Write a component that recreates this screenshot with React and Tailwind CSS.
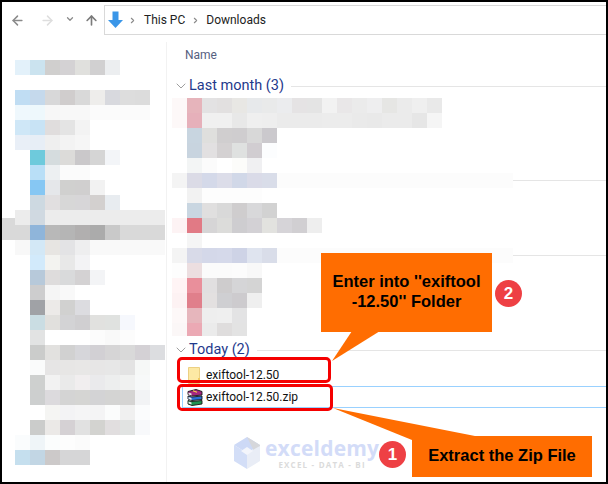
import React from 'react';
import { ArrowLeft, ArrowRight, ArrowUp, ChevronDown, ChevronRight } from 'lucide-react';

// blurred nav pane, one row per 15px, first cell sits at x=15
const sidebarRows = [
  ['#e3f1fa', '#cbe3ef', '#d0cfce', '#d4d2d4', '#e0e0dd', '#d1d0d1', '#eceef0'],
  [],
  ['#c0ddf3', '#c5d9ec', '#d8d8d9', '#d0cdcd', '#d9d9d9', '#eeedeb', '#d8d9de', '#dddddd', '#dcdcdc'],
  ['#eff8fd', '#eef8fc', '#f7f7f7', '#f8f8f8', '#f8f8f8', '#fbfbfb', '#fbfbfb', '#fbfbfb', '#fbfbfb'],
  ['#cfe7f7', '#c8e3f5', '#e0dddd', '#e4e4e4', '#f3f3f3'],
  ['#e9eff7', '#e7eef6', '#efefef', '#f3f3f3', '#f6f6f6'],
  ['', '#6ecadc', '#d5dcde', '#dcdbd9', '#cac8ca', '#d5d5d5', '#f3f5f8'],
  ['', '#b9dff7', '#edf0f2', '#fbfbfb', '#fbfbfb'],
  ['', '#86c7f3', '#e5e7ea', '#d0d0cf', '#d0cfcf', '#f2f2f2'],
  ['', '#cdd9e1', '#e1dfe0', '#d7d7d7', '#d7d6d8', '#d3d0cf', '#e8ecf0'],
  ['#ececec', '#d0d9e1', '#ececec', '#ececec', '#ececec', '#ececec', '#ececec', '#ececec', '#ececec', '#ececec'],
  ['#d9d9d9', '#8fb5da', '#b8b8b8', '#b5b5b5', '#b1afaf', '#ababab', '#c9c9c9', '#d9d9d9', '#d9d9d9', '#d9d9d9'],
  ['#f8f8f8', '#d3e8f6', '#e7e5e2', '#e3e3e5', '#eeeeef', '#f9f9f9', '#f9f9f9', '#f9f9f9', '#f9f9f9', '#f9f9f9'],
  ['', '#d2eafb', '#f3f3f0', '#e8e8e8', '#f3f3f5'],
  ['', '#b7c9da', '#dedcdc', '#d9dadb', '#d4d2d3', '#f3f4f6'],
  ['', '#cdcdce', '#f5f5f5', '#f9f9f9'],
  ['', '#a0a2a6', '#eceae8', '#d1d1d0', '#dcdce0'],
  ['', '#cadde3', '#e1e0dd', '#d3d3d5', '#d0cfd1', '#e1e1df', '#e0e2e0', '#f6f8fd'],
  ['', '#e2e3e3', '', '', '', '#fcfcfc', '#f9f9f9', '#fcfcfc'],
  ['', '#cbcccb', '#e2e1df', '#d1d1d1', '#d6d6da', '#d2d0d4', '#d6d5d6', '#d9d9d9', '#d4d1d5', '#dcdde0'],
  ['', '#fafbfb', '#e6e5e5', '#e7e6e5', '#e8e7e6', '#e7e6e6', '#e7e7e7', '#e3e3e3', '#f6f8f7'],
  ['', '#ced0cf', '#f2f2f2', '#eaeaea', '#f1eeef', '#eaeaec', '#edeeee', '#f0f1f0', '#f7f9f9'],
  ['', '#cdcfcf', '#dcdadd', '#d4d4d4', '#d5d5d3', '#d3d3d5', '#d4d4d3', '#d5d4d3', '#f2f3f5'],
  ['', '', '#f5f5f3', '#f3f3f5', '#f5f5f6', '#f4f4f5', '#fbfcfc', '#f0f0f0', '#fbfcfd'],
  ['', '#cbcccb', '#ebe9e7', '#d5d1d4', '#e1e1e1', '#d3d3d0', '#e1dedf', '#e1e3e2', '#f8f9fb'],
  ['#fafcfd', '#eff5f8', '#fbfdfd', '#fdfdfd', '#fbfbfb'],
  ['#c5dfee', '#c2d6e4', '#ccc9c9', '#d6d6d7', '#d6d6d7'],
];

// blurred "Last month" list, first cell sits at x=172
const fileRows = [
  { cells: ['#fdf8f8', '#e6b4bb', '#e3e2e3', '#e2e0e0', '#e8e7e4', '#e7e9eb', '#e9eaea', '#ebecee', '#e5e3e4', '#e4e4e4', '#f2f2f2', '#e9e7e8', '#ebebeb', '#eeeeef', '#e6e6e4', '#ebebeb', '#efefef', '#e9e9e9'] },
  { cells: ['#fdf8f8', '#e6b0ba', '#f0f0f0', '#f0f0f0', '#e8e8e8', '#efefef', '#eeeeee', '#ebebeb', '#ebebeb', '#ebebeb', '#ececec', '#ececec', '#eaeaea', '#e9e9e9', '#ebebeb', '#ebebeb', '#e6e6e6', '#f5f5f5'] },
  { cells: ['', '#c8d5e0', '#dfdfdd', '#d0cecf', '#cfcdcf', '#d8d8d8', '#cbc9cd'] },
  { cells: ['', '#c8d4df', '#e2e0e1', '#d4d1d2', '#dfe1e0', '#d1cdd1', '#fcfdfe'] },
  { cells: ['', '#f3f5f5', '#fbfbfb', '', '#fcfcfa', '#f0f0f2'] },
  { cells: ['#f4f4f4', '#dbdbe6', '#d4d9e9', '#dcdde9', '#d1d8e8', '#dadbe8', '#d9dde9'], tail: true },
  { cells: ['', '#f2f2f2', '#fdfdfd', '#fdfdfd', '#fdfdfd', '#fdfdfd'] },
  { cells: ['', '#c9d6e1', '#e0dfdf', '#d9d9d9', '#cfcdce', '#d8d8da', '#d2d2d2'] },
  { cells: ['#fdf3f4', '#e17a85', '#d6d5d6', '#dcdcda', '#cecdd0', '#d3d1d5', '#e2e2df', '#d6d4d8', '#d1cfd2', '#eeeeee'] },
  { cells: ['', '#f5f5f5'] },
  { cells: ['#f4f4f4', '#d8dae8', '#d4d8e9', '#d5d9ea', '#ced3e6', '#dfe4ef', '#d9dde9'], tail: true },
  { cells: ['#fdfdfd', '#ecdee0', '#fbfbfb', '#fbfbfb', '#fcfcfc', '#f8f8f8'] },
  { cells: ['#fff4f5', '#e98f9b', '#e1dfe0', '#cecccd', '#d5d5d7', '#d4d4d4'] },
  { cells: ['#fdf2f3', '#e07f8b', '#e3e0e0', '#cfcfd2', '#cdcbce', '#efefef'] },
  { cells: ['#fdf8f8', '#e6b6bc', '#eeeeee', '#efefef', '#e3e3e4'] },
  { cells: ['#fbf7f7', '#eba9b4', '#ebebeb', '#dfdddd', '#e3e3e3'] },
];

const Cells = ({ cells }) =>
  cells.map((color, i) => (
    <div key={i} className="w-[15px] h-[15px] shrink-0" style={{ backgroundColor: color || 'transparent' }} />
  ));

const GroupHeader = ({ label }) => (
  <div className="flex items-center h-[24px]">
    <ChevronDown size={16} strokeWidth={1} className="ml-[6px] text-[#6d6d6d] shrink-0" />
    <span className="text-[14.5px] text-[#1f3a8c] whitespace-nowrap">{label}</span>
    <div className="ml-[7px] flex-1 h-px bg-[#e5e5e5]" />
  </div>
);

const FolderIcon = () => (
  <svg width="13" height="17" viewBox="0 0 13 17">
    <path d="M0.5 0.5H11.5V16.5H0.5Z" fill="#fde9a4" stroke="#ecd083" />
    <path d="M10 11H12V16H10Z" fill="#f3c95f" />
  </svg>
);

const RarIcon = () => (
  <svg width="16" height="17" viewBox="0 0 16 17">
    <path d="M1 2.5L9 0.5L15 2.5V6L5 7L1 5.5Z" fill="#a3257f" stroke="#161616" strokeWidth="0.9" />
    <path d="M1 7L5 8L15 7V10.5L5 11.5L1 10Z" fill="#2a6fd6" stroke="#161616" strokeWidth="0.9" />
    <path d="M1 11.5L5 12.5L15 11.5V15L5 16.5L1 15Z" fill="#1f9150" stroke="#161616" strokeWidth="0.9" />
    <path d="M1.5 3.5L4.5 4.5V6.5L1.5 5.5ZM1.5 8L4.5 9V11L1.5 10ZM1.5 12.5L4.5 13.5V15.5L1.5 14.5Z" fill="#e8e8e8" />
    <path d="M6 1.8L10 3.2" stroke="#f3d34a" strokeWidth="1.2" />
  </svg>
);

const Badge = ({ n, className }) => (
  <div className={`absolute w-[27px] h-[27px] rounded-full bg-[#ee4044] text-white font-bold text-[17px] flex items-center justify-center ${className}`}>
    {n}
  </div>
);

const Watermark = () => (
  <div className="absolute left-[231px] top-[435px] flex items-start">
    <svg width="28" height="32" viewBox="0 0 28 32">
      <polygon points="14,0 27,8 14,16 1,8" fill="#cdd9f6" />
      <polygon points="14,0 27,8 27,22 20,18 20,12" fill="#d6d7db" />
      <polygon points="1,8 14,16 14,32 1,24" fill="#d3def7" />
      <polygon points="14,16 27,9 27,24 14,32" fill="#e9edf6" />
      <polygon points="14,10 20,14 14,18 8,14" fill="#f3f5fb" />
    </svg>
    <div className="ml-[4px] flex flex-col items-center">
      <span className="text-[21px] leading-[23px] font-bold text-[#d3dcf8] tracking-[0.2px] font-['Open_Sans',sans-serif]">exceldemy</span>
      <span className="text-[8px] leading-[10px] font-bold text-[#dbdbdb] tracking-[1.2px] font-['Open_Sans',sans-serif] whitespace-pre">EXCEL - DATA - BI</span>
    </div>
  </div>
);

export default function App() {
  return (
    <div className="relative w-[608px] h-[484px] border-2 border-black bg-white overflow-hidden flex flex-col font-['Roboto',sans-serif] text-[12px]">
      {/* toolbar */}
      <div className="flex h-[40px] shrink-0">
        <div className="flex w-[102px] pt-[10px] items-start shrink-0">
          <ArrowLeft size={15} strokeWidth={2.4} className="ml-[8px] mt-px text-[#8a8a8a]" />
          <ArrowRight size={15} strokeWidth={2.4} className="ml-[15px] mt-px text-[#dedede]" />
          <ChevronDown size={10} strokeWidth={3} className="ml-[10px] mt-[2px] text-[#8a8a8a]" />
          <ArrowUp size={15} strokeWidth={2.6} className="ml-[9px] mt-px text-[#7b7b7b]" />
        </div>
        <div className="flex-1 h-[30px] mt-[3px] border-y border-l border-[#d9d9d9] flex items-center">
          <svg width="17" height="18" viewBox="0 0 17 18" className="ml-[2px]">
            <path d="M5.5 0.5H11.5V9H16L8.5 17L1 9H5.5Z" fill="#3a96e8" />
          </svg>
          <ChevronRight size={9} strokeWidth={3} className="ml-[4px] text-[#8a8a8a]" />
          <span className="ml-[7px] text-[#222]">This PC</span>
          <ChevronRight size={9} strokeWidth={3} className="ml-[6px] text-[#8a8a8a]" />
          <span className="ml-[6px] text-[#222]">Downloads</span>
        </div>
      </div>

      <div className="flex flex-1 min-h-0">
        {/* nav pane, pixelated */}
        <div className="w-[164px] pt-[18px] shrink-0">
          {sidebarRows.map((cells, i) => (
            <div key={i} className="flex h-[15px]">
              <div className="w-[13px] h-[15px] shrink-0">
                {i === 10 && <div className="mt-[8px] h-[7px] bg-[#d9d9d9]" />}
                {i === 11 && <div className="h-[15px] bg-[#d9d9d9]" />}
              </div>
              <Cells cells={cells} />
            </div>
          ))}
        </div>

        <div className="flex-1 border-l border-[#f2f2f2] flex flex-col">
          <div className="h-[22px] mt-[2px] pl-[18px] flex items-center text-[#55607f] shrink-0">Name</div>
          <div className="mt-[8px]">
            <GroupHeader label="Last month (3)" />
          </div>
          <div className="pl-[5px] h-[238px] overflow-hidden shrink-0">
            {fileRows.map((row, i) => (
              <div key={i} className="flex items-center h-[15px]">
                <Cells cells={row.cells} />
                {row.tail && <div className="w-[236px] h-[15px] bg-[#fcfcfc] shrink-0" />}
                {row.tail && <div className="flex-1 h-px bg-[#e5e5e5]" />}
              </div>
            ))}
          </div>
          <div className="mt-[2px]">
            <GroupHeader label="Today (2)" />
          </div>
          <div className="flex items-center h-[24px] pt-[2px] pl-[21px]">
            <FolderIcon />
            <span className="ml-[5px] text-[#111]">exiftool-12.50</span>
          </div>
          <div className="flex items-center h-[22px] ml-[15px] pl-[4px] border-y border-l border-[#99d1ff]">
            <RarIcon />
            <span className="ml-[3px] text-[#111]">exiftool-12.50.zip</span>
          </div>
        </div>
      </div>

      <Watermark />

      {/* annotations */}
      <div className="absolute left-[175px] top-[355px] w-[154px] h-[26px] border-[3px] border-[#f50000] rounded-[5px]" />
      <div className="absolute left-[175px] top-[382px] w-[156px] h-[27px] border-[3px] border-[#f50000] rounded-[5px]" />

      <svg className="absolute left-0 top-0 pointer-events-none" width="604" height="480" viewBox="2 2 604 480">
        <polygon points="352,331 380,331 332,361" fill="#ff6d01" />
        <polygon points="333,408 480,437 412,440" fill="#ff6d01" />
      </svg>

      <div className="absolute left-[319px] top-[251px] w-[171px] h-[79px] pb-[4px] bg-[#ff6d01] flex items-center justify-center text-center text-black font-bold text-[16.5px] leading-[20px] font-['Liberation_Sans',sans-serif]">
        <div>
          Enter into ''exiftool
          <br />
          -12.50'' Folder
        </div>
      </div>
      <Badge n="2" className="left-[493px] top-[278px] font-['Liberation_Sans',sans-serif]" />

      <div className="absolute left-[410px] top-[434px] w-[180px] h-[41px] pb-[2px] bg-[#ff6d01] flex items-center justify-center text-black font-bold text-[16.5px] font-['Liberation_Sans',sans-serif] whitespace-nowrap">
        Extract the Zip File
      </div>
      <Badge n="1" className="left-[377px] top-[439px] font-['Liberation_Sans',sans-serif]" />
    </div>
  );
}
